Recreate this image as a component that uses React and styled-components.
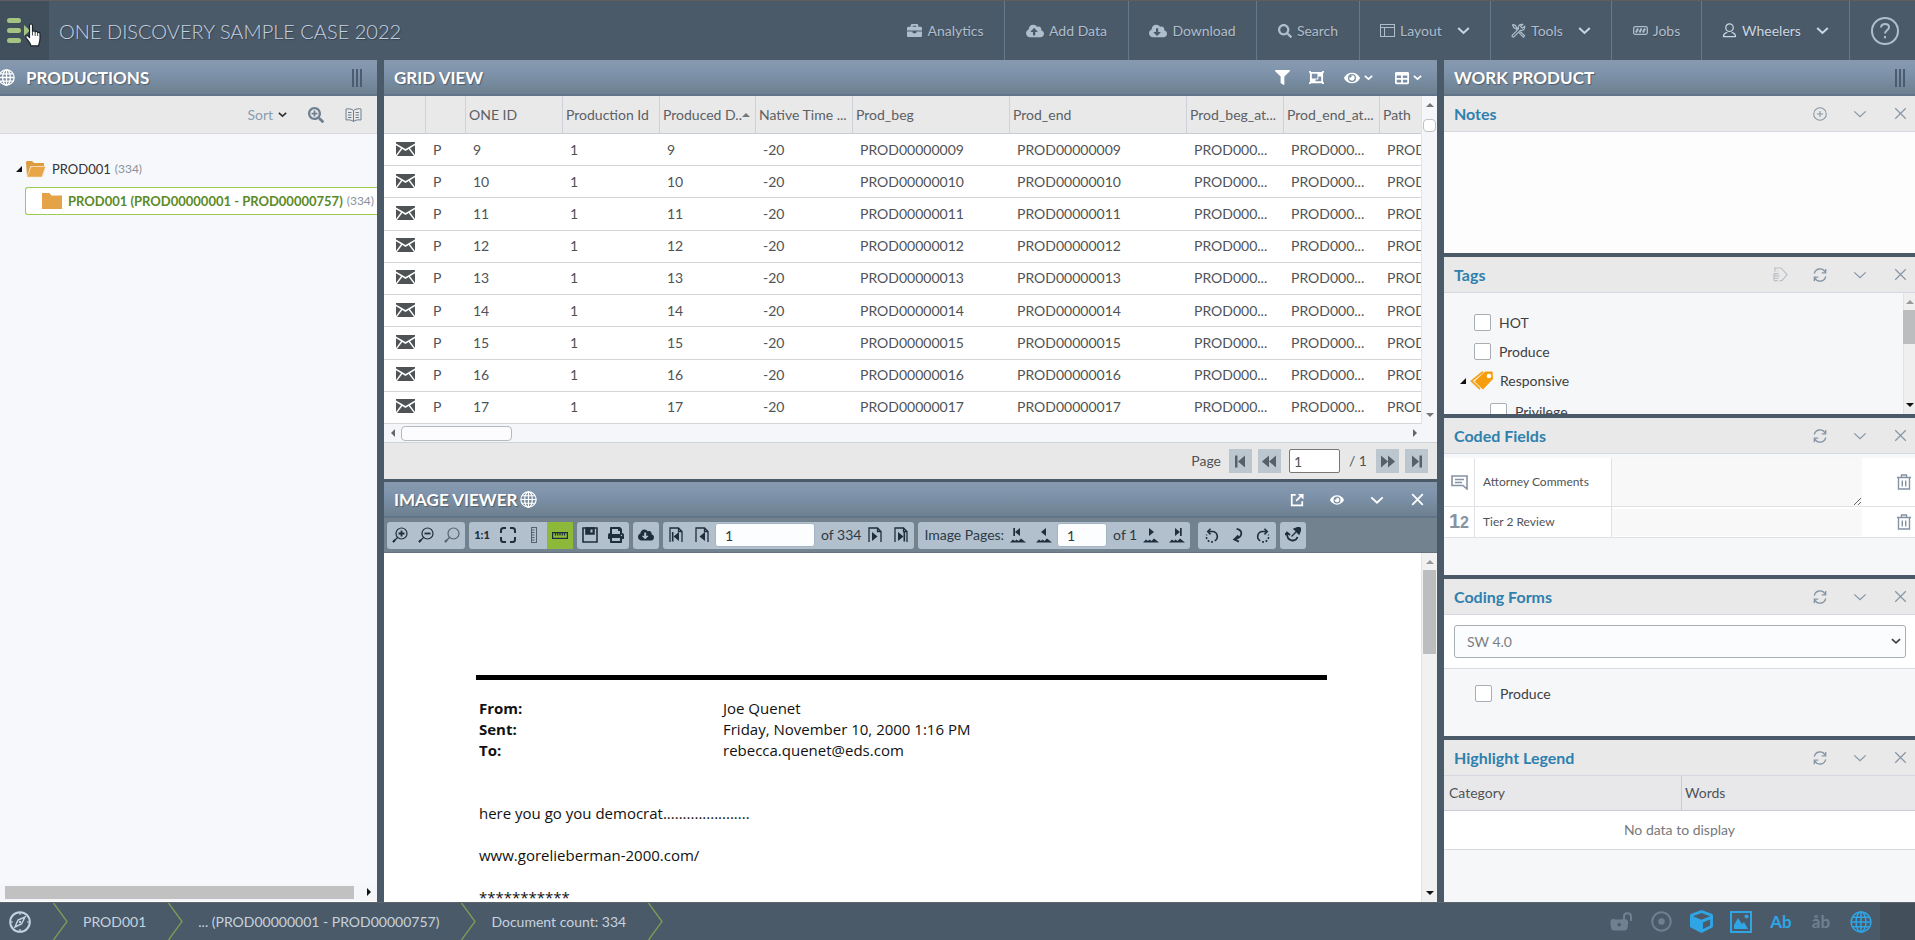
import React from 'react';
import styled, { createGlobalStyle, css } from 'styled-components';
import {
  FaBriefcase, FaCloudUploadAlt, FaCloudDownloadAlt, FaSearch, FaFilter, FaEye, FaTable,
  FaPrint, FaObjectGroup, FaCube, FaSearchPlus,
} from 'react-icons/fa';

const GlobalStyle = createGlobalStyle`
  *, *::before, *::after { box-sizing: border-box; }
  html, body { margin: 0; height: 100%; }
  body { font-family: Lato, "Open Sans", sans-serif; font-size: 14px; line-height: 20px; color: #505356; background: #4b5a69; overflow: hidden; }
  button, input, select, textarea { font: inherit; color: inherit; }
  button { display: inline-flex; align-items: center; justify-content: center; padding: 0; border: 0; background: none; cursor: pointer; }
  svg { display: block; flex: none; }
`;

/* ---------- icons ---------- */

const Icon = ({ size = 16, w, h, box = '0 0 16 16', stroke = 1, children, filled }) => (
  <svg
    width={w || size} height={h || size} viewBox={box} aria-hidden="true"
    fill={filled ? 'currentColor' : 'none'} stroke={filled ? 'none' : 'currentColor'} strokeWidth={stroke}
  >{children}</svg>
);

const Chevron = ({ size = 14, stroke = 1.6 }) => (
  <Icon size={size} stroke={stroke}><path d="M1.5 5l6.500 6 6.500-6" /></Icon>
);
const Close = ({ size = 14, stroke = 1.5 }) => (
  <Icon size={size} stroke={stroke}><path d="M1.500 1.500l13 13M14.500 1.500l-13 13" /></Icon>
);
const Refresh = () => (
  <Icon size={14} stroke={1.5}>
    <path d="M1.500 6.500A6.600 6.600 0 0 1 13.800 4.500M14.500 9.500A6.600 6.600 0 0 1 2.200 11.500M14.500 1v4.500H10M1.500 15v-4.500H6" />
  </Icon>
);
const Globe = ({ size = 17, stroke = 1.2, disc }) => (
  <Icon size={size} stroke={stroke}>
    <circle cx="8" cy="8" r="7.200" fill={disc || 'none'} />
    <ellipse cx="8" cy="8" rx="3.600" ry="7.200" />
    <path d="M8 .8v14.400M.8 8h14.400M2 4.500h12M2 11.500h12" />
  </Icon>
);
const MenuLogo = () => (
  <Icon w={24} h={28} box="0 0 24 28" filled>
    <rect x="0" y="1" width="14" height="5" rx="2.500" />
    <rect x="0" y="11" width="14" height="5" rx="2.500" />
    <rect x="0" y="21" width="14" height="5" rx="2.500" />
    <path d="M17 8l6 5.500-6 5.500z" />
  </Icon>
);
const HandCursor = () => (
  <svg width="18" height="24" viewBox="0 0 18 24" fill="#fff" stroke="#1c242b" strokeWidth="1.200" strokeLinejoin="round" aria-hidden="true">
    <path d="M4.500 2.500c0-2 3-2 3 0v6c.5-1 2.500-.8 2.700.5.7-.9 2.300-.6 2.500.6.900-.7 2.300-.2 2.300 1.200v5c0 3-1 4-1.500 7h-7.500C5.500 19.500 3 18 1 14.500c-.8-1.600 1-2.800 2.200-1.500l1.300 1.500z" />
    <path d="M7.500 8.500v4M10.200 9v4M12.700 10v3" fill="none" strokeWidth=".8" />
  </svg>
);
const LayoutIcon = () => (
  <Icon w={15} h={13} box="0 0 15 13"><rect x=".5" y=".5" width="14" height="12" /><path d="M.5 3.500h14M4.500 3.500v9" /></Icon>
);
const ToolsIcon = () => (
  <Icon size={15} stroke={1.300}>
    <path d="M1.500 1.500l3 1L6 5l1.500 1.500M9.500 9.500l1 .2 4 4-1.300 1.300-4-4-.2-1M5 9.500L1.500 13c-1 1.500.8 2.500 1.800 1.500L10 7.800c3 .8 5-1.300 4.500-4.300L12 5.500l-1.700-1.700L12.300 1.500c-3-.5-5 1.500-4.300 4.500L5 9.500M1.500 1.500L3 5l2 .8L6.500 7" />
  </Icon>
);
const JobsIcon = () => (
  <Icon w={15} h={9} box="0 0 15 9" stroke={1.300}><rect x=".7" y=".7" width="13.600" height="7.600" rx="1.500" /><path d="M3 6.500l2-4M6.500 6.500l2-4M10 6.500l2-4" strokeWidth="2" /></Icon>
);
const UserIcon = () => (
  <Icon w={15} h={15} stroke={1.300}><circle cx="8" cy="5" r="4" /><path d="M1.500 15c0-3 2-4.500 4.200-5M14.500 15c0-3-2-4.500-4.200-5M1.500 14.500h13" /></Icon>
);
const HelpIcon = () => (
  <Icon size={28} box="0 0 28 28" stroke={2}>
    <circle cx="14" cy="14" r="13" /><path d="M10 10.500c.3-5 8-4.500 8-.3 0 3-4 3-4 6.300M14 19v2.200" />
  </Icon>
);
const BookIcon = () => (
  <Icon w={17} h={14} box="0 0 17 14"><path d="M8.500 2.500C7 .8 3 .5 1 1v11c2.500-.5 6 0 7.500 1.500C10 12 13.500 11.500 16 12V1c-2-.5-6-.2-7.500 1.500zM8.500 2.500v11M3 4.500h3.500M3 7h3.500M3 9.500h3.500M10.500 4.500H14M10.500 7H14M10.500 9.500H14" /></Icon>
);
const FolderOpen = () => (
  <svg width="20" height="17" viewBox="0 0 20 17" aria-hidden="true">
    <path d="M0 1.500C0 .7.500 0 1.500 0h4.500l2 2h10v3H4.500L1 16z" fill="#dd9c40" />
    <path d="M5 5.500h14.500L16 16H1z" fill="#e9a648" stroke="#f6e3c4" strokeWidth=".6" />
  </svg>
);
const Folder = () => (
  <svg width="20" height="16" viewBox="0 0 20 16" aria-hidden="true"><path d="M0 0h7.500l2 2.500H20V16H0z" fill="#e5a347" /></svg>
);
const Mail = () => (
  <Icon w={19} h={14} box="0 0 19 14" filled>
    <path d="M0 0h19v1.500L9.500 7 0 1.500zM0 3.200l5 3L0 13zM19 3.200l-5 3L19 13zM6.300 7l3.200 2 3.200-2L18 14H1z" />
  </Icon>
);
const Magnifier = ({ sign }) => (
  <Icon size={16} stroke={1.200}>
    <circle cx="9.500" cy="6.500" r="5.500" /><path d="M5.500 10.500L1 15" />
    <path d="M1 15l2-2" strokeWidth="2" />
    {sign && <path d={sign === '+' ? 'M6.500 6.500h6M9.500 3.500v6' : 'M6.500 6.500h6'} strokeWidth="1.800" />}
  </Icon>
);
const FitIcon = () => (
  <Icon size={16} stroke={2}><path d="M1 6V3.500Q1 1 3.500 1H6M10 1h2.500Q15 1 15 3.500V6M15 10v2.500q0 2.500-2.500 2.500H10M6 15H3.500Q1 15 1 12.500V10" /></Icon>
);
const RulerV = () => (
  <Icon w={6} h={16} box="0 0 6 16"><rect x=".5" y=".5" width="5" height="15" /><path d="M1 3h2.500M1 5.500h2.500M1 8h2.500M1 10.500h2.500M1 13h2.500" /></Icon>
);
const RulerH = () => (
  <Icon w={16} h={7} box="0 0 16 7" stroke={1.200}><rect x=".6" y=".6" width="14.800" height="5.800" /><path d="M3.500 1v2.500M5.700 1v2.500M8 1v2.500M10.300 1v2.500M12.500 1v2.500" /></Icon>
);
const SaveIcon = () => (
  <Icon size={16} stroke={1.600}><path d="M1 1h14v14H1z" /><path d="M4 1h8v6H4z" fill="currentColor" /><path d="M8.500 2.500h2v3h-2z" fill="#b2c0cd" stroke="none" /></Icon>
);
const PageNav = ({ back, end }) => (
  <Icon w={16} h={16} stroke={1.300}>
    <path d="M2 15V1h8.500L14 4.500V15M10.500 1v3.500H14" />
    <g transform={back ? 'translate(16 0) scale(-1 1)' : undefined}>
      <path d="M5 5l5.500 4.500L5 14z" fill="currentColor" stroke="none" />
      {end && <path d="M11.300 5v9.500" strokeWidth="1.600" />}
    </g>
  </Icon>
);
const ImageNav = ({ back, end }) => (
  <Icon size={16} filled>
    <path d="M0 15.500l3-3 2 1.500 1.500-1.500 2 1.500 2.500-2.500 5 4z" />
    <g transform={back ? 'translate(16 0) scale(-1 1)' : undefined}>
      <path d="M6 1l5 4-5 4z" />{end && <path d="M11 1h1.700v8H11z" />}
    </g>
  </Icon>
);
const Rotate = ({ flip }) => (
  <Icon size={15} stroke={1.700}>
    <g transform={flip ? 'translate(16 0) scale(-1 1)' : undefined}>
      <path d="M5 3.800h4a5.300 5.300 0 0 1 2.500 9.900" /><path d="M7 .8L4 3.800l3 3" />
      <path d="M9.500 14.600A5.500 5.500 0 0 1 3 7" strokeDasharray="2 1.800" />
    </g>
  </Icon>
);
const RotateHalf = () => (
  <Icon size={15} stroke={1.900}><path d="M7 1c7 1.500 7 8.500-1.500 11M9 8l-4.500 4.300 5 2.200" /></Icon>
);
const PinRotate = () => (
  <Icon size={16} stroke={1.800}><path d="M2 6.500c0 8 8.500 9 10.500 3.500M0 8l2-2.500L5 8" /><path d="M9 2l5 5 1-2.500L16 2 14 0l-2 .8zM11 5L6.500 9.500" fill="currentColor" strokeWidth="1.300" /></Icon>
);
const PopOut = () => (
  <Icon size={14} stroke={2}><path d="M6.500 2H2v12h12V9.500M7 9l6.500-6.500" /><path d="M9 1h6.500v6.500z" fill="currentColor" stroke="none" /></Icon>
);
const StepIcon = ({ kind }) => (
  <Icon w={14} h={13} box="0 0 14 13" filled>
    <g transform={kind === 'first' || kind === 'prev' ? 'translate(14 0) scale(-1 1)' : undefined}>
      {kind === 'prev' || kind === 'next'
        ? <path d="M0 .5l7 6-7 6zM7 .5l7 6-7 6z" />
        : <path d="M2 .5l7 6-7 6zM9.500.5H12v12H9.500z" />}
    </g>
  </Icon>
);
const Triangle = ({ dir = 'up', size = 8 }) => {
  const d = { up: 'M0 6l4-4 4 4z', down: 'M0 2l4 4 4-4z', left: 'M6 0L2 4l4 4z', right: 'M2 0l4 4-4 4z', corner: 'M8 0v8H0z' }[dir];
  return <Icon size={size} box="0 0 8 8" filled><path d={d} /></Icon>;
};
const TagOutline = () => (
  <Icon size={15} stroke={1.200}><path d="M2 5V1h6.500L15 8l-5.500 6.500H7M4.500 4h1M1 7h5M1 9.500h6M1 12h5M1 14.500h4M1 7v7.500" /></Icon>
);
const TagsIcon = () => (
  <svg width="24" height="19" viewBox="0 0 24 19" aria-hidden="true">
    <path d="M13 .8L1.500 10l8.500 8" fill="none" stroke="#f3a51f" strokeWidth="1.800" />
    <path d="M15 .5h7.500L23 8 13 18.500 4.500 10.500z" fill="#f59d0c" /><circle cx="19" cy="5" r="2.300" fill="#fff" />
  </svg>
);
const CommentIcon = () => (
  <Icon w={17} h={15} box="0 0 17 15" stroke={1.600}><path d="M1 1h15v13l-4-3.500H1zM4 4.500h9M4 7.500h7" /></Icon>
);
const Trash = () => (
  <Icon w={14} h={16} box="0 0 14 16" stroke={1.400}><path d="M0 3.500h14M4.500 3V1h5v2M1.500 4v11h11V4M5.300 6.500v6M8.700 6.500v6" /></Icon>
);
const Compass = () => (
  <Icon size={22} box="0 0 22 22" stroke={2}>
    <circle cx="11" cy="11" r="9.800" /><path d="M16 6l-3.500 7L6 16l3-7z" strokeWidth="1.500" /><circle cx="11" cy="11" r="1.200" fill="currentColor" stroke="none" />
    <path d="M11 2v2M11 18v2M2 11h2M18 11h2" strokeWidth="1.200" />
  </Icon>
);
const Unlock = () => (
  <Icon w={22} h={19} box="0 0 22 19" filled>
    <path fillRule="evenodd" d="M3 7q5.500 1 11 0 5 0 4 5l-.500 4q-.5 2.500-3 2.500H4Q1.500 18.500 1 16l-.500-4Q0 7 3 7zm6.200 4a1.700 1.700 0 1 0 .01 0z" />
    <path d="M14 7V4.500c0-4.500 7-4.500 7 0V9" fill="none" stroke="currentColor" strokeWidth="2" />
  </Icon>
);
const Target = () => (
  <Icon size={21} box="0 0 21 21" stroke={2}><circle cx="10.500" cy="10.500" r="9.300" /><circle cx="10.500" cy="10.500" r="3.200" fill="currentColor" stroke="none" /></Icon>
);
const PictureIcon = () => (
  <Icon size={22} box="0 0 22 22" stroke={2}>
    <rect x="1" y="1" width="20" height="20" /><path d="M4 18V14l4-7 4 6 2-2 4 7z" fill="currentColor" stroke="none" /><circle cx="16.500" cy="5.500" r="2" fill="currentColor" stroke="none" />
  </Icon>
);

/* ---------- shell ---------- */

const Shell = styled.div`
  display: grid;
  grid-template-rows: 60px minmax(0, 1fr) 38px;
  height: 100vh;
`;

const TopBar = styled.header`
  display: flex;
  align-items: stretch;
  background: #4b5a69;
  border-top: 1px solid #5f5d60;
`;

const MenuButton = styled.button`
  position: relative;
  width: 49px;
  && { justify-content: flex-start; padding-left: 7px; }
  background: #414f5c;
  color: #a6c481;
`;

const Pointer = styled.span`
  position: absolute;
  left: 25px;
  top: 22px;
`;

const CaseTitle = styled.h1`
  flex: 1;
  min-width: 0;
  margin: 0;
  padding-left: 10px;
  align-self: center;
  font-size: 20px;
  font-weight: 300;
  line-height: 28px;
  white-space: nowrap;
  color: #c3d2e2;
  text-shadow: 1px 1px 1px #36424e;
`;

const Nav = styled.nav`
  display: flex;
`;

const NavItem = styled.button`
  width: ${(p) => p.$w}px;
  gap: 5px;
  font-size: 14px;
  color: ${(p) => (p.$strong ? '#ccd7e2' : '#b0becc')};
  text-shadow: 0 1px 1px #3a4652;
  border-right: ${(p) => (p.$last ? '0' : '1px solid #66798b')};
  && { border-right: ${(p) => (p.$last ? '0' : '1px solid #66798b')}; padding-left: ${(p) => (p.$last ? 5 : 0)}px; }
  ${(p) => p.$menu && css`> svg:last-child { margin-left: 10px; color: #ccd7e2; }`}
`;

const Workspace = styled.main`
  display: grid;
  grid-template-columns: 377px minmax(0, 1fr) 471px;
  gap: 7px;
  min-height: 0;
`;

const Column = styled.section`
  display: flex;
  flex-direction: column;
  min-width: 0;
  min-height: 0;
  overflow: hidden;
  background: ${(p) => p.$bg || 'transparent'};
`;

const PanelHeader = styled.header`
  display: flex;
  align-items: center;
  flex: none;
  height: 36px;
  padding: 1px ${(p) => (p.$padRight ?? 15)}px 0 ${(p) => (p.$padLeft ?? 10)}px;
  background: linear-gradient(#8799ae, #7f94ac 35%, #6d8090);
  border-bottom: 2px solid #61758a;
  color: #fff;
`;

const PanelTitle = styled.h2`
  display: flex;
  align-items: center;
  gap: 3px;
  flex: 1;
  margin: 0;
  font-size: 17px;
  font-weight: 700;
  line-height: 20px;
  text-shadow: 1px 1px 1px #4d5d6c;
`;

const HeaderGlobe = styled.span`
  display: flex;
  margin-left: -2px;
  margin-right: 11px;
`;

const Grip = styled.span`
  width: 10px;
  height: 18px;
  border-left: 2px solid #4a5d70;
  border-right: 2px solid #4a5d70;
  background: linear-gradient(#4a5d70, #4a5d70) center / 2px 100% no-repeat;
`;

const HeaderButton = styled.button`
  width: ${(p) => p.$w || 40}px;
  height: 30px;
  gap: 4px;
`;

/* ---------- productions ---------- */

const TreeTools = styled.div`
  display: flex;
  align-items: center;
  justify-content: flex-end;
  flex: none;
  height: 38px;
  gap: 21px;
  padding-right: 15px;
  background: #e9e9ea;
  border-bottom: 1px solid #d6d8db;
  color: #6e7f90;
`;

const SortButton = styled.button`
  gap: 5px;
  && { color: #8a9cae; }
  svg { color: #333; }
`;

const Tree = styled.ul`
  flex: 1;
  margin: 0;
  padding: 21px 0 0;
  list-style: none;
  white-space: nowrap;
  font-size: 13px;
  color: #333;
`;

const TreeRow = styled.li`
  display: flex;
  align-items: center;
  height: 28px;
  margin-left: ${(p) => p.$indent}px;
  ${(p) => p.$selected && css`
    margin-top: 4px;
    padding-left: 16px;
    border: 1px solid #9dcb52;
    border-right: 0;
    border-radius: 3px 0 0 3px;
    background: #fff;
    color: #5b8a26;
  `}
`;

const TreeLabel = styled.a`
  margin-left: 6px;
  color: inherit;
  text-decoration: none;
  font-weight: ${(p) => (p.$bold ? 700 : 400)};
`;

const TreeCount = styled.span`
  margin-left: 4px;
  font-size: 12px;
  color: #8a939d;
`;

const TreeArrow = styled.span`
  display: flex;
  width: 10px;
  color: #111;
`;

const HTrack = styled.div`
  display: flex;
  align-items: center;
  justify-content: space-between;
  flex: none;
  height: 19px;
  padding: 0 ${(p) => p.$pr}px 0 5px;
  background: #f5f6fa;
  border-bottom: 1px solid ${(p) => p.$line || '#fff'};
  color: ${(p) => p.$ink || '#111'};
`;

const HThumb = styled.span`
  width: 349px;
  height: 13px;
  background: #c1c1c2;
`;

const PillThumb = styled.span`
  width: 111px;
  height: 15px;
  margin: 0 auto 0 4px;
  border: 1px solid #b6b9be;
  border-radius: 4px;
  background: #fcfcfe;
`;

/* ---------- grid view ---------- */

const GridBody = styled.div`
  display: flex;
  flex: none;
  overflow: hidden;
  background: #fff;
`;

const GridClip = styled.div`
  flex: 1;
  min-width: 0;
  overflow: hidden;
`;

const DataTable = styled.table`
  width: 1100px;
  height: 328px;
  table-layout: fixed;
  border-collapse: separate;
  border-spacing: 0;
  th, td {
    overflow: hidden;
    white-space: nowrap;
    text-align: left;
    font-weight: 400;
  }
  th {
    height: 38px;
    padding: 0 0 0 3px;
    background: #e9e9ea;
    border-right: 1px solid #cdd2d9;
    border-bottom: 1px solid #c6cdd6;
    color: #5c5f63;
  }
  td {
    height: 32px;
    padding: 0 7px;
    border-bottom: 1px solid #d3d6d9;
  }
  td svg { margin: 0 auto 2px; }
`;

const HeadCell = styled.span`
  display: flex;
  align-items: center;
  svg { color: #777; }
`;

const VTrack = styled.div`
  display: flex;
  flex-direction: column;
  align-items: center;
  flex: none;
  width: ${(p) => p.$w || 16}px;
  padding: 5px 0;
  background: ${(p) => p.$bg || '#f5f6fa'};
  border-left: 1px solid #e1e3e8;
  color: ${(p) => p.$ink || '#777'};
  > svg:last-child { margin-top: auto; color: ${(p) => p.$end || '#777'}; }
`;

const VThumb = styled.span`
  width: 13px;
  height: ${(p) => p.$h}px;
  margin-top: ${(p) => (p.$pill ? 10 : 4)}px;
  background: #bcbdbf;
  ${(p) => p.$pill && css`border: 1px solid #bfc1c6; border-radius: 4px; background: #fff;`}
`;

const Pager = styled.div`
  display: flex;
  align-items: center;
  justify-content: flex-end;
  flex: none;
  gap: 6px;
  height: 36px;
  margin-bottom: 3px;
  padding-right: 9px;
  background: #e8e8e9;
  label { margin-right: 2px; }
`;

const PagerButton = styled.button`
  width: 23px;
  height: 24px;
  && { background: #bcc6ce; color: #55606a; }
`;

const PagerInput = styled.input`
  width: 51px;
  height: 24px;
  margin-left: 2px;
  padding: 0 4px;
  border: 1px solid #777;
  border-radius: 2px;
  background: #fff;
`;

const PagerTotal = styled.span`
  margin: 0 3px;
`;

/* ---------- image viewer ---------- */

const ViewerTools = styled.div`
  display: flex;
  align-items: center;
  flex: none;
  gap: 4px;
  height: 35px;
  padding: 0 3px;
  background: #73828f;
  border-bottom: 1px solid #64737f;
`;

const ToolGroup = styled.div`
  display: flex;
  align-items: center;
  flex: none;
  height: 27px;
  margin-right: ${(p) => (p.$wide ? 4 : 0)}px;
  border-radius: 3px;
  background: #b2c0cd;
  color: #2b3a47;
  white-space: nowrap;
`;

const ToolButton = styled.button`
  width: 26px;
  height: 27px;
  font-size: 11px;
  font-weight: 900;
  && {
    color: ${(p) => (p.$soft ? '#53626f' : '#1f2e3b')};
    background: ${(p) => (p.$active ? '#8cb93a' : 'transparent')};
  }
`;

const ToolInput = styled.input`
  width: ${(p) => p.$w}px;
  height: 24px;
  padding: 0 9px;
  border: 1px solid #a5b4c2;
  border-radius: 3px;
  background: #fcfdff;
`;

const ToolText = styled.label`
  padding: 0 1px 0 6px;
`;

const Viewer = styled.div`
  display: flex;
  flex: 1;
  min-height: 0;
  background: #fff;
`;

const Page = styled.article`
  flex: 1;
  min-width: 0;
  overflow: hidden;
  padding: 122px 94px 0 92px;
  font-family: "Open Sans", "Noto Sans", sans-serif;
  font-size: 15px;
  line-height: 21px;
  color: #111;
  p { margin: 0 3px 21px; }
`;

const PageRule = styled.hr`
  height: 5px;
  margin: 0 0 18px;
  border: 0;
  background: #000;
`;

const MailHead = styled.dl`
  display: grid;
  grid-template-columns: 244px 1fr;
  margin: 0 3px 42px;
  dt { font-weight: 700; }
  dd { margin: 0; }
`;

/* ---------- work product ---------- */

const Section = styled.section`
  display: flex;
  flex-direction: column;
  flex: ${(p) => (p.$fill ? '1 1 0' : '0 0 157px')};
  min-height: 0;
  margin-bottom: ${(p) => (p.$fill ? 0 : 4)}px;
  overflow: hidden;
  background: ${(p) => p.$bg || '#f6f7f9'};
`;

const SectionHeader = styled.header`
  display: flex;
  align-items: center;
  flex: none;
  gap: 10px;
  height: 36px;
  padding-left: 10px;
  background: #e9e9ea;
  border-bottom: 1px solid #d5d8e0;
`;

const SectionTitle = styled.h3`
  flex: 1;
  margin: 0;
  font-size: 16px;
  line-height: 20px;
  font-weight: 700;
  color: #2e80ae;
`;

const SectionButton = styled.button`
  width: 30px;
  height: 30px;
  && { color: ${(p) => (p.$faint ? '#b9bec4' : '#8796a5')}; }
`;

const TagBody = styled.div`
  display: flex;
  flex: 1;
  min-height: 0;
`;

const TagList = styled.div`
  flex: 1;
  padding-top: 15px;
  overflow: hidden;
`;

const CheckRow = styled.label`
  display: flex;
  align-items: center;
  gap: 8px;
  height: 29px;
  padding-left: ${(p) => p.$indent}px;
  color: #3d4043;
`;

const Check = styled.input`
  appearance: none;
  width: 17px;
  height: 17px;
  margin: 0;
  border: 1px solid #a9aeb4;
  border-radius: 2px;
  background: #fff;
`;

const TagGroup = styled.div`
  display: flex;
  align-items: center;
  height: 29px;
  margin-bottom: 2px;
  padding-left: 16px;
  gap: 6px;
  color: #3d4043;
  svg:first-child { color: #111; margin-right: -2px; }
`;

const FieldTable = styled.table`
  width: 100%;
  margin-top: 4px;
  table-layout: fixed;
  border-collapse: separate;
  border-spacing: 0;
  background: #fff;
  font-size: 12px;
  th, td { height: 31px; padding: 0; border-bottom: 1px solid #dfe1e4; }
  th { padding-left: 8px; text-align: left; font-weight: 400; border-left: 1px solid #dfe1e4; border-right: 1px solid #dfe1e4; }
  tr:first-child > * { height: 49px; }
  td:first-child svg { margin: 0 auto; }
  td button { display: flex; margin-left: auto; margin-right: 4px; color: #8593a3; }
  td svg { color: #8593a3; }
`;

const NumberMark = styled.span`
  display: flex;
  align-items: baseline;
  justify-content: center;
  font-family: "Liberation Sans", sans-serif;
  font-size: 20px;
  font-weight: 700;
  color: #8593a3;
  small { font-size: 16px; }
`;

const FieldArea = styled.textarea`
  display: block;
  width: 100%;
  height: 48px;
  border: 0;
  background: #f8f8f9;
  resize: vertical;
`;

const FieldInput = styled.input`
  display: block;
  width: 100%;
  height: 27px;
  border: 0;
  background: #f8f8f9;
`;

const FormPick = styled.div`
  position: relative;
  flex: none;
  padding: 10px 9px 10px 10px;
  background: #fff;
  border-bottom: 1px solid #d8dbdf;
  > svg { position: absolute; right: 14px; top: 21px; color: #444; }
`;

const Select = styled.select`
  display: block;
  appearance: none;
  width: 100%;
  height: 33px;
  padding: 0 12px;
  border: 1px solid #a8adb3;
  border-radius: 3px;
  background: #fbfcfe;
  color: #7a7e83;
`;

const FormBody = styled.div`
  padding-top: 10px;
`;

const LegendTable = styled.table`
  width: 100%;
  table-layout: fixed;
  border-collapse: separate;
  border-spacing: 0;
  background: #fff;
  th { height: 35px; padding: 0 3px; text-align: left; font-weight: 400; background: #e8e8ea; border-bottom: 1px solid #c9cdd3; }
  th:first-child { width: 238px; padding-left: 5px; border-right: 1px solid #c9cdd3; }
  td { height: 39px; padding: 0; text-align: center; color: #77797c; border-bottom: 1px solid #d8dadd; }
`;

/* ---------- footer ---------- */

const Footer = styled.footer`
  display: flex;
  align-items: stretch;
  background: #4b5a69;
  border-top: 1px solid #5d646a;
  color: #c6d3df;
`;

const Crumb = styled.a`
  display: flex;
  align-items: center;
  padding: 0 22px 0 ${(p) => (p.$home ? 9 : 15)}px;
  color: inherit;
  text-decoration: none;
  white-space: nowrap;
`;

const CrumbEdge = () => (
  <svg width="15" height="37" viewBox="0 0 15 37" fill="none" stroke="#7e9d55" strokeWidth="1.300" aria-hidden="true"><path d="M.5 0L14 18.500.5 37" /></svg>
);

const Status = styled.div`
  display: flex;
  align-items: center;
  margin-left: auto;
  padding-right: 34px;
  background: linear-gradient(#434f5b, #434f5b) right / 35px 100% no-repeat;
`;

const StatusButton = styled.button`
  width: 40px;
  height: 36px;
  && {
    font-size: 17px;
    font-weight: 700;
    color: ${(p) => (p.$on ? '#2fa5e6' : '#718090')};
  }
`;

/* ---------- page ---------- */

const columns = [
  { label: '', w: 42 }, { label: '', w: 40 }, { label: 'ONE ID', w: 97 }, { label: 'Production Id', w: 97 },
  { label: 'Produced D..', w: 96, sorted: true }, { label: 'Native Time ...', w: 97 }, { label: 'Prod_beg', w: 157 },
  { label: 'Prod_end', w: 177 }, { label: 'Prod_beg_at...', w: 97 }, { label: 'Prod_end_at...', w: 96 }, { label: 'Path', w: 104 },
];
const rows = [9, 10, 11, 12, 13, 14, 15, 16, 17];
const shorten = (text, keep) => `${text.slice(0, keep)}...`;

function SectionTop({ title, lead }) {
  return (
    <SectionHeader>
      <SectionTitle>{title}</SectionTitle>
      {lead}
      <SectionButton aria-label={`Collapse ${title}`}><Chevron stroke={1.5} /></SectionButton>
      <SectionButton aria-label={`Close ${title}`}><Close size={13} /></SectionButton>
    </SectionHeader>
  );
}
const RefreshButton = () => <SectionButton aria-label="Refresh"><Refresh /></SectionButton>;

export default function App() {
  return (
    <Shell>
      <GlobalStyle />
      <TopBar>
        <MenuButton aria-label="Menu"><MenuLogo /><Pointer><HandCursor /></Pointer></MenuButton>
        <CaseTitle>ONE DISCOVERY SAMPLE CASE 2022</CaseTitle>
        <Nav>
          <NavItem $w={118}><FaBriefcase size={15} />Analytics</NavItem>
          <NavItem $w={124}><FaCloudUploadAlt size={18} />Add Data</NavItem>
          <NavItem $w={128}><FaCloudDownloadAlt size={18} />Download</NavItem>
          <NavItem $w={103}><FaSearch size={14} />Search</NavItem>
          <NavItem $w={131} $menu><LayoutIcon />Layout<Chevron size={13} stroke={2.500} /></NavItem>
          <NavItem $w={121} $menu><ToolsIcon />Tools<Chevron size={13} stroke={2.500} /></NavItem>
          <NavItem $w={90}><JobsIcon />Jobs</NavItem>
          <NavItem $w={148} $menu $strong><UserIcon />Wheelers<Chevron size={13} stroke={2.500} /></NavItem>
          <NavItem $w={65} $last aria-label="Help"><HelpIcon /></NavItem>
        </Nav>
      </TopBar>

      <Workspace>
        <Column $bg="#f6f8fb">
          <PanelHeader $padLeft={0}>
            <HeaderGlobe><Globe size={17} /></HeaderGlobe>
            <PanelTitle>PRODUCTIONS</PanelTitle>
            <Grip />
          </PanelHeader>
          <TreeTools>
            <SortButton>Sort<Chevron size={9} stroke={3} /></SortButton>
            <button aria-label="Find in tree"><FaSearchPlus size={16} /></button>
            <button aria-label="Index"><BookIcon /></button>
          </TreeTools>
          <Tree>
            <TreeRow $indent={16}>
              <TreeArrow><Triangle dir="corner" size={6} /></TreeArrow>
              <FolderOpen />
              <TreeLabel href="#prod001">PROD001</TreeLabel><TreeCount>(334)</TreeCount>
            </TreeRow>
            <TreeRow $indent={25} $selected>
              <Folder />
              <TreeLabel href="#range" $bold>PROD001 (PROD00000001 - PROD00000757)</TreeLabel><TreeCount>(334)</TreeCount>
            </TreeRow>
          </Tree>
          <HTrack $pr={4}>
            <HThumb /><Triangle dir="right" />
          </HTrack>
        </Column>

        <Column>
          <PanelHeader $padRight={4}>
            <PanelTitle>GRID VIEW</PanelTitle>
            <HeaderButton $w={34} aria-label="Filter"><FaFilter size={15} /></HeaderButton>
            <HeaderButton $w={34} aria-label="Group"><FaObjectGroup size={15} /></HeaderButton>
            <HeaderButton $w={50} aria-label="Visibility"><FaEye size={16} /><Chevron size={9} stroke={3} /></HeaderButton>
            <HeaderButton $w={50} aria-label="Columns"><FaTable size={14} /><Chevron size={9} stroke={3} /></HeaderButton>
          </PanelHeader>
          <GridBody>
            <GridClip>
              <DataTable>
                <colgroup>{columns.map((c, i) => <col key={i} width={c.w} />)}</colgroup>
                <thead>
                  <tr>
                    {columns.map((c, i) => (
                      <th key={i} scope="col"><HeadCell>{c.label}{c.sorted && <Triangle />}</HeadCell></th>
                    ))}
                  </tr>
                </thead>
                <tbody>
                  {rows.map((n) => {
                    const id = `PROD${String(n).padStart(8, '0')}`;
                    return (
                      <tr key={n}>
                        <td><Mail /></td><td>P</td><td>{n}</td><td>1</td><td>{n}</td><td>-20</td>
                        <td>{id}</td><td>{id}</td><td>{shorten(id, 7)}</td><td>{shorten(id, 7)}</td><td>PROD</td>
                      </tr>
                    );
                  })}
                </tbody>
              </DataTable>
            </GridClip>
            <VTrack><Triangle /><VThumb $h={13} $pill /><Triangle dir="down" /></VTrack>
          </GridBody>
          <HTrack $pr={18} $ink="#666" $line="#cfd3d8">
            <Triangle dir="left" /><PillThumb /><Triangle dir="right" />
          </HTrack>
          <Pager>
            <label htmlFor="grid-page">Page</label>
            <PagerButton aria-label="First page"><StepIcon kind="first" /></PagerButton>
            <PagerButton aria-label="Previous page"><StepIcon kind="prev" /></PagerButton>
            <PagerInput id="grid-page" defaultValue="1" />
            <PagerTotal>/ 1</PagerTotal>
            <PagerButton aria-label="Next page"><StepIcon kind="next" /></PagerButton>
            <PagerButton aria-label="Last page"><StepIcon kind="last" /></PagerButton>
          </Pager>

          <PanelHeader $padRight={0}>
            <PanelTitle>IMAGE VIEWER <Globe size={17} stroke={1.1} /></PanelTitle>
            <HeaderButton aria-label="Open in new window"><PopOut /></HeaderButton>
            <HeaderButton aria-label="View"><FaEye size={14} /></HeaderButton>
            <HeaderButton aria-label="Collapse viewer"><Chevron size={14} stroke={2.2} /></HeaderButton>
            <HeaderButton aria-label="Close viewer"><Close size={13} stroke={2.2} /></HeaderButton>
          </PanelHeader>
          <ViewerTools>
            <ToolGroup>
              <ToolButton aria-label="Zoom in"><Magnifier sign="+" /></ToolButton>
              <ToolButton aria-label="Zoom out"><Magnifier sign="-" /></ToolButton>
              <ToolButton $soft aria-label="Zoom area"><Magnifier /></ToolButton>
            </ToolGroup>
            <ToolGroup>
              <ToolButton>1:1</ToolButton>
              <ToolButton aria-label="Fit page"><FitIcon /></ToolButton>
              <ToolButton $soft aria-label="Fit height"><RulerV /></ToolButton>
              <ToolButton $active aria-label="Fit width"><RulerH /></ToolButton>
            </ToolGroup>
            <ToolGroup>
              <ToolButton aria-label="Save"><SaveIcon /></ToolButton>
              <ToolButton aria-label="Print"><FaPrint size={16} /></ToolButton>
            </ToolGroup>
            <ToolGroup><ToolButton aria-label="Download"><FaCloudDownloadAlt size={16} /></ToolButton></ToolGroup>
            <ToolGroup>
              <ToolButton aria-label="First document"><PageNav back end /></ToolButton>
              <ToolButton aria-label="Previous document"><PageNav back /></ToolButton>
              <ToolInput $w={100} id="doc-no" defaultValue="1" />
              <ToolText htmlFor="doc-no">of 334</ToolText>
              <ToolButton aria-label="Next document"><PageNav /></ToolButton>
              <ToolButton aria-label="Last document"><PageNav end /></ToolButton>
            </ToolGroup>
            <ToolGroup $wide>
              <ToolText htmlFor="img-no">Image Pages:</ToolText>
              <ToolButton aria-label="First image page"><ImageNav back end /></ToolButton>
              <ToolButton aria-label="Previous image page"><ImageNav back /></ToolButton>
              <ToolInput $w={50} id="img-no" defaultValue="1" />
              <ToolText as="span">of 1</ToolText>
              <ToolButton aria-label="Next image page"><ImageNav /></ToolButton>
              <ToolButton aria-label="Last image page"><ImageNav end /></ToolButton>
            </ToolGroup>
            <ToolGroup>
              <ToolButton aria-label="Rotate left"><Rotate /></ToolButton>
              <ToolButton aria-label="Rotate half"><RotateHalf /></ToolButton>
              <ToolButton aria-label="Rotate right"><Rotate flip /></ToolButton>
            </ToolGroup>
            <ToolGroup><ToolButton aria-label="Pin rotation"><PinRotate /></ToolButton></ToolGroup>
          </ViewerTools>
          <Viewer>
            <Page>
              <PageRule />
              <MailHead>
                <dt>From:</dt><dd>Joe Quenet</dd>
                <dt>Sent:</dt><dd>Friday, November 10, 2000 1:16 PM</dd>
                <dt>To:</dt><dd>rebecca.quenet@eds.com</dd>
              </MailHead>
              <p>here you go you democrat......................</p>
              <p>www.gorelieberman-2000.com/</p>
              <p>***********</p>
            </Page>
            <VTrack $bg="#f1f1f2" $ink="#999" $end="#111"><Triangle /><VThumb $h={84} /><Triangle dir="down" /></VTrack>
          </Viewer>
        </Column>

        <Column>
          <PanelHeader $padRight={10}>
            <PanelTitle>WORK PRODUCT</PanelTitle>
            <Grip />
          </PanelHeader>
          <Section $bg="#fdfdfd">
            <SectionTop
              title="Notes"
              lead={(
                <SectionButton aria-label="Add note">
                  <Icon size={14} stroke={1.200}><circle cx="8" cy="8" r="7.200" /><path d="M8 4.500v7M4.500 8h7" /></Icon>
                </SectionButton>
              )}
            />
          </Section>
          <Section>
            <SectionTop title="Tags" lead={<><SectionButton $faint aria-label="Edit tags"><TagOutline /></SectionButton><RefreshButton /></>} />
            <TagBody>
              <TagList>
                <CheckRow $indent={30}><Check type="checkbox" />HOT</CheckRow>
                <CheckRow $indent={30}><Check type="checkbox" />Produce</CheckRow>
                <TagGroup><Triangle dir="corner" size={6} /><TagsIcon />Responsive</TagGroup>
                <CheckRow $indent={46}><Check type="checkbox" />Privilege</CheckRow>
              </TagList>
              <VTrack $w={12} $bg="#efeff0" $ink="#999" $end="#111"><Triangle /><VThumb $h={34} /><Triangle dir="down" /></VTrack>
            </TagBody>
          </Section>
          <Section>
            <SectionTop title="Coded Fields" lead={<RefreshButton />} />
            <FieldTable>
              <colgroup><col width="30" /><col width="138" /><col /><col width="53" /></colgroup>
              <tbody>
                <tr>
                  <td><CommentIcon /></td>
                  <th scope="row"><label htmlFor="comments">Attorney Comments</label></th>
                  <td><FieldArea id="comments" /></td>
                  <td><button aria-label="Clear comments"><Trash /></button></td>
                </tr>
                <tr>
                  <td><NumberMark>1<small>2</small></NumberMark></td>
                  <th scope="row"><label htmlFor="tier">Tier 2 Review</label></th>
                  <td><FieldInput id="tier" /></td>
                  <td><button aria-label="Clear tier"><Trash /></button></td>
                </tr>
              </tbody>
            </FieldTable>
          </Section>
          <Section>
            <SectionTop title="Coding Forms" lead={<RefreshButton />} />
            <FormPick>
              <Select aria-label="Coding form" defaultValue="sw"><option value="sw">SW 4.0</option></Select>
              <Chevron size={10} stroke={2.800} />
            </FormPick>
            <FormBody><CheckRow $indent={31}><Check type="checkbox" />Produce</CheckRow></FormBody>
          </Section>
          <Section $fill>
            <SectionTop title="Highlight Legend" lead={<RefreshButton />} />
            <LegendTable>
              <thead><tr><th scope="col">Category</th><th scope="col">Words</th></tr></thead>
              <tbody><tr><td colSpan={2}>No data to display</td></tr></tbody>
            </LegendTable>
          </Section>
        </Column>
      </Workspace>

      <Footer>
        <Crumb href="#home" $home aria-label="Home"><Compass /></Crumb><CrumbEdge />
        <Crumb href="#prod">PROD001</Crumb><CrumbEdge />
        <Crumb href="#docs">... (PROD00000001 - PROD00000757)</Crumb><CrumbEdge />
        <Crumb href="#count">Document count: 334</Crumb><CrumbEdge />
        <Status>
          <StatusButton aria-label="Unlocked"><Unlock /></StatusButton>
          <StatusButton aria-label="Target"><Target /></StatusButton>
          <StatusButton $on aria-label="Native"><FaCube size={23} /></StatusButton>
          <StatusButton $on aria-label="Image"><PictureIcon /></StatusButton>
          <StatusButton $on>Ab</StatusButton>
          <StatusButton>åb</StatusButton>
          <StatusButton $on aria-label="Web"><Globe size={22} stroke={1.100} /></StatusButton>
        </Status>
      </Footer>
    </Shell>
  );
}
